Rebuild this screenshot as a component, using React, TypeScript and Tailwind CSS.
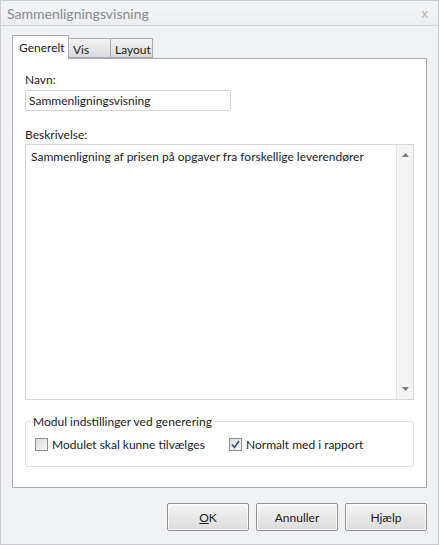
const TABS = [
  { label: "Generelt", active: true, width: 57 },
  { label: "Vis", active: false, width: 42 },
  { label: "Layout", active: false, width: 42 },
];

const BUTTONS = ["OK", "Annuller", "Hjælp"];

function Checkbox({ checked, label }: { checked: boolean; label: string }) {
  return (
    <label className="flex items-center gap-[4px]">
      <span className="w-[13px] h-[13px] border border-[#8f8f8f] bg-gradient-to-br from-[#dcdcdc] to-[#f8f8f8] flex items-center justify-center">
        {checked ? (
          <svg width="9" height="9" viewBox="0 0 9 9">
            <path d="M1 4.5 L3.5 7.5 L8 1" fill="none" stroke="#3b4f86" strokeWidth="1.6" />
          </svg>
        ) : null}
      </span>
      <span>{label}</span>
    </label>
  );
}

export default function App() {
  return (
    <div
      className="w-[439px] h-[545px] bg-[#f0f1f3] border border-[#c9ccd1] flex flex-col text-[12px] leading-[15px] text-[#1b1b1b]"
      style={{ fontFamily: 'Lato, "Open Sans", sans-serif' }}
    >
      {/* title bar */}
      <div className="h-[25px] flex items-center justify-between pl-[6px] pr-[10px] bg-gradient-to-b from-[#f4f5f7] to-[#eceef1] border-b border-[#cfd2d6]">
        <span className="text-[14px] text-[#85888d]">Sammenligningsvisning</span>
        <span className="text-[13px] text-[#b4b7bb]">x</span>
      </div>

      <div className="flex-1 flex flex-col px-[11px] pt-[9px]">
        {/* tabs */}
        <div className="flex items-end h-[23px]">
          {TABS.map((tab) =>
            tab.active ? (
              <div
                key={tab.label}
                className="h-[24px] pl-[6px] pt-[4px] bg-white border border-b-0 border-[#a7aab0] relative z-10 -mb-[1px]"
                style={{ width: tab.width }}
              >
                {tab.label}
              </div>
            ) : (
              <div
                key={tab.label}
                className="h-[20px] pl-[4px] pt-[3px] bg-gradient-to-b from-[#f4f4f4] to-[#dadada] border border-l-0 border-[#a7aab0]"
                style={{ width: tab.width }}
              >
                {tab.label}
              </div>
            )
          )}
        </div>

        {/* panel */}
        <div className="h-[430px] bg-white border border-[#a7aab0] px-[12px] pt-[13px] flex flex-col">
          <div>Navn:</div>
          <div className="mt-[3px] w-[206px] h-[21px] border border-[#d4d6da] rounded-[2px] px-[3px] flex items-center">
            Sammenligningsvisning
          </div>

          <div className="mt-[16px]">Beskrivelse:</div>
          <div className="mt-[2px] h-[256px] border border-[#d4d6da] flex">
            <div className="flex-1 px-[5px] pt-[4px]">
              Sammenligning af prisen på opgaver fra forskellige leverendører
            </div>
            <div className="w-[17px] bg-[#f3f3f3] border-l border-[#e4e4e4] flex flex-col justify-between items-center py-[8px]">
              <svg width="7" height="4" viewBox="0 0 7 4">
                <path d="M0 4 L3.5 0 L7 4 Z" fill="#7a7a7a" />
              </svg>
              <svg width="7" height="4" viewBox="0 0 7 4">
                <path d="M0 0 L3.5 4 L7 0 Z" fill="#7a7a7a" />
              </svg>
            </div>
          </div>

          {/* group box */}
          <div className="mt-[21px] h-[46px] border border-[#d9dce0] rounded-[3px] relative px-[9px] pt-[15px]">
            <span className="absolute -top-[8px] left-[5px] bg-white px-[2px]">
              Modul indstillinger ved generering
            </span>
            <div className="flex">
              <div className="w-[194px]">
                <Checkbox checked={false} label="Modulet skal kunne tilvælges" />
              </div>
              <Checkbox checked label="Normalt med i rapport" />
            </div>
          </div>
        </div>

        {/* buttons */}
        <div className="flex justify-end gap-[7px] mt-[15px]">
          {BUTTONS.map((label) => (
            <button
              key={label}
              type="button"
              className="w-[82px] h-[28px] rounded-[2px] border border-[#8e9297] bg-gradient-to-b from-[#f5f5f5] to-[#dcdcdc] shadow-[inset_0_0_0_1px_#fafafa]"
            >
              {label === "OK" ? (
                <span>
                  <span className="underline">O</span>K
                </span>
              ) : (
                label
              )}
            </button>
          ))}
        </div>
      </div>
    </div>
  );
}
